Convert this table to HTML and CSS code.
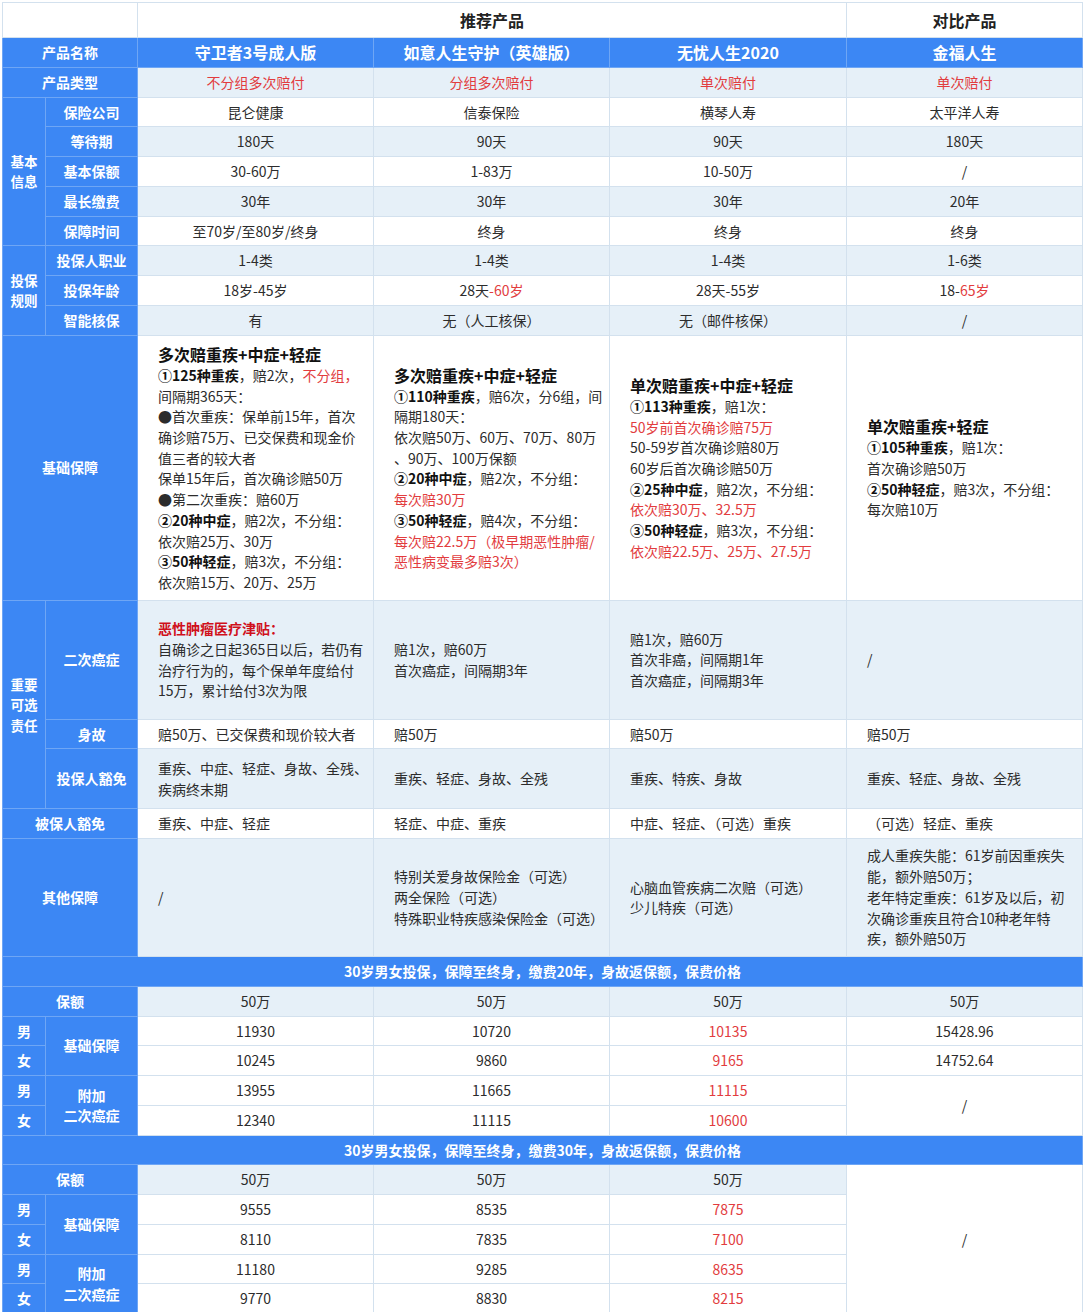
FILE: index.html
```html
<!DOCTYPE html>
<html lang="zh-CN">
<head>
<meta charset="utf-8">
<title>重疾险产品对比</title>
<link rel="stylesheet" href="styles.css">
</head>
<body>
<div class="wrap">
<table class="cmp">
<colgroup>
<col class="ca"><col class="cb"><col class="cc"><col class="cd"><col class="ce"><col class="cf">
</colgroup>
<tbody>
<tr class="rh">
  <td colspan="2" class="blank"></td>
  <td colspan="3" class="hd lt">推荐产品</td>
  <td class="hd">对比产品</td>
</tr>
<tr class="r bluerow">
  <td colspan="2" class="lb big">产品名称</td>
  <td class="big">守卫者3号成人版</td>
  <td class="big">如意人生守护（英雄版）</td>
  <td class="big">无忧人生2020</td>
  <td class="big">金福人生</td>
</tr>
<tr class="r lt">
  <td colspan="2" class="lb">产品类型</td>
  <td class="red">不分组多次赔付</td>
  <td class="red">分组多次赔付</td>
  <td class="red">单次赔付</td>
  <td class="red">单次赔付</td>
</tr>
<tr class="r">
  <td rowspan="5" class="lb grp">基本<br>信息</td>
  <td class="lb">保险公司</td>
  <td>昆仑健康</td><td>信泰保险</td><td>横琴人寿</td><td>太平洋人寿</td>
</tr>
<tr class="r lt">
  <td class="lb">等待期</td>
  <td>180天</td><td>90天</td><td>90天</td><td>180天</td>
</tr>
<tr class="r">
  <td class="lb">基本保额</td>
  <td>30-60万</td><td>1-83万</td><td>10-50万</td><td>/</td>
</tr>
<tr class="r lt">
  <td class="lb">最长缴费</td>
  <td>30年</td><td>30年</td><td>30年</td><td>20年</td>
</tr>
<tr class="r">
  <td class="lb">保障时间</td>
  <td>至70岁/至80岁/终身</td><td>终身</td><td>终身</td><td>终身</td>
</tr>
<tr class="r lt">
  <td rowspan="3" class="lb grp">投保<br>规则</td>
  <td class="lb">投保人职业</td>
  <td>1-4类</td><td>1-4类</td><td>1-4类</td><td>1-6类</td>
</tr>
<tr class="r">
  <td class="lb">投保年龄</td>
  <td>18岁-45岁</td><td>28天<span class="red">-60岁</span></td><td>28天-55岁</td><td>18-<span class="red">65岁</span></td>
</tr>
<tr class="r lt">
  <td class="lb">智能核保</td>
  <td>有</td><td>无（人工核保）</td><td>无（邮件核保）</td><td>/</td>
</tr>
<tr class="rbase">
  <td colspan="2" class="lb">基础保障</td>
  <td class="tx">
    <div class="ttl">多次赔重疾+中症+轻症</div>
    <b>①125种重疾</b>，赔2次，<span class="red">不分组，</span><br>
    间隔期365天：<br>
    ●首次重疾：保单前15年，首次<br>
    确诊赔75万、已交保费和现金价<br>
    值三者的较大者<br>
    保单15年后，首次确诊赔50万<br>
    ●第二次重疾：赔60万<br>
    <b>②20种中症</b>，赔2次，不分组：<br>
    依次赔25万、30万<br>
    <b>③50种轻症</b>，赔3次，不分组：<br>
    依次赔15万、20万、25万
  </td>
  <td class="tx">
    <div class="ttl">多次赔重疾+中症+轻症</div>
    <b>①110种重疾</b>，赔6次，分6组，间<br>
    隔期180天：<br>
    依次赔50万、60万、70万、80万<br>
    、90万、100万保额<br>
    <b>②20种中症</b>，赔2次，不分组：<br>
    <span class="red">每次赔30万</span><br>
    <b>③50种轻症</b>，赔4次，不分组：<br>
    <span class="red">每次赔22.5万（极早期恶性肿瘤/</span><br>
    <span class="red">恶性病变最多赔3次）</span>
  </td>
  <td class="tx">
    <div class="ttl">单次赔重疾+中症+轻症</div>
    <b>①113种重疾</b>，赔1次：<br>
    <span class="red">50岁前首次确诊赔75万</span><br>
    50-59岁首次确诊赔80万<br>
    60岁后首次确诊赔50万<br>
    <b>②25种中症</b>，赔2次，不分组：<br>
    <span class="red">依次赔30万、32.5万</span><br>
    <b>③50种轻症</b>，赔3次，不分组：<br>
    <span class="red">依次赔22.5万、25万、27.5万</span>
  </td>
  <td class="tx">
    <div class="ttl">单次赔重疾+轻症</div>
    <b>①105种重疾</b>，赔1次：<br>
    首次确诊赔50万<br>
    <b>②50种轻症</b>，赔3次，不分组：<br>
    每次赔10万
  </td>
</tr>
<tr class="rtall lt">
  <td rowspan="3" class="lb grp">重要<br>可选<br>责任</td>
  <td class="lb">二次癌症</td>
  <td class="tx"><span class="dred">恶性肿瘤医疗津贴：</span><br>自确诊之日起365日以后，若仍有<br>治疗行为的，每个保单年度给付<br>15万，累计给付3次为限</td>
  <td class="tx">赔1次，赔60万<br>首次癌症，间隔期3年</td>
  <td class="tx">赔1次，赔60万<br>首次非癌，间隔期1年<br>首次癌症，间隔期3年</td>
  <td class="tx">/</td>
</tr>
<tr class="r">
  <td class="lb">身故</td>
  <td class="tx">赔50万、已交保费和现价较大者</td>
  <td class="tx">赔50万</td>
  <td class="tx">赔50万</td>
  <td class="tx">赔50万</td>
</tr>
<tr class="r2 lt">
  <td class="lb">投保人豁免</td>
  <td class="tx">重疾、中症、轻症、身故、全残、<br>疾病终末期</td>
  <td class="tx">重疾、轻症、身故、全残</td>
  <td class="tx">重疾、特疾、身故</td>
  <td class="tx">重疾、轻症、身故、全残</td>
</tr>
<tr class="r">
  <td colspan="2" class="lb">被保人豁免</td>
  <td class="tx">重疾、中症、轻症</td>
  <td class="tx">轻症、中症、重疾</td>
  <td class="tx">中症、轻症、（可选）重疾</td>
  <td class="tx">（可选）轻症、重疾</td>
</tr>
<tr class="rtall lt">
  <td colspan="2" class="lb">其他保障</td>
  <td class="tx">/</td>
  <td class="tx">特别关爱身故保险金（可选）<br>两全保险（可选）<br>特殊职业特疾感染保险金（可选）</td>
  <td class="tx">心脑血管疾病二次赔（可选）<br>少儿特疾（可选）</td>
  <td class="tx">成人重疾失能：61岁前因重疾失<br>能，额外赔50万；<br>老年特定重疾：61岁及以后，初<br>次确诊重疾且符合10种老年特<br>疾，额外赔50万</td>
</tr>
<tr class="r banner">
  <td colspan="6">30岁男女投保，保障至终身，缴费20年，身故返保额，保费价格</td>
</tr>
<tr class="r lt">
  <td colspan="2" class="lb">保额</td>
  <td>50万</td><td>50万</td><td>50万</td><td>50万</td>
</tr>
<tr class="r">
  <td class="lb">男</td>
  <td rowspan="2" class="lb">基础保障</td>
  <td>11930</td><td>10720</td><td class="red">10135</td><td>15428.96</td>
</tr>
<tr class="r">
  <td class="lb">女</td>
  <td>10245</td><td>9860</td><td class="red">9165</td><td>14752.64</td>
</tr>
<tr class="r">
  <td class="lb">男</td>
  <td rowspan="2" class="lb">附加<br>二次癌症</td>
  <td>13955</td><td>11665</td><td class="red">11115</td><td rowspan="2">/</td>
</tr>
<tr class="r">
  <td class="lb">女</td>
  <td>12340</td><td>11115</td><td class="red">10600</td>
</tr>
<tr class="r banner">
  <td colspan="6">30岁男女投保，保障至终身，缴费30年，身故返保额，保费价格</td>
</tr>
<tr class="r">
  <td colspan="2" class="lb">保额</td>
  <td class="ltc">50万</td><td class="ltc">50万</td><td class="ltc">50万</td><td rowspan="5">/</td>
</tr>
<tr class="r">
  <td class="lb">男</td>
  <td rowspan="2" class="lb">基础保障</td>
  <td>9555</td><td>8535</td><td class="red">7875</td>
</tr>
<tr class="r">
  <td class="lb">女</td>
  <td>8110</td><td>7835</td><td class="red">7100</td>
</tr>
<tr class="r">
  <td class="lb">男</td>
  <td rowspan="2" class="lb">附加<br>二次癌症</td>
  <td>11180</td><td>9285</td><td class="red">8635</td>
</tr>
<tr class="r">
  <td class="lb">女</td>
  <td>9770</td><td>8830</td><td class="red">8215</td>
</tr>
</tbody>
</table>
</div>
</body>
</html>
```
FILE: styles.css
```css
html, body {
  margin: 0;
  padding: 0;
  background: #ffffff;
}
body {
  font-family: "Noto Sans CJK SC", "Noto Sans", sans-serif;
}
.wrap {
  padding: 2px 2px 0 2px;
}
.cmp {
  border-collapse: collapse;
  table-layout: fixed;
  width: 1080px;
}
.ca { width: 43px; }
.cb { width: 92px; }
.cc { width: 236px; }
.cd { width: 236px; }
.ce { width: 237px; }
.cf { width: 236px; }

.cmp td {
  border: 1px solid #d3e1ee;
  padding: 0;
  font-size: 14px;
  line-height: 20.7px;
  color: #2c2c2c;
  text-align: center;
  vertical-align: middle;
  white-space: nowrap;
  background: #ffffff;
}
.rh { height: 35px; }
.r { height: 29.75px; }
.r2 { height: 59.5px; }
.rbase { height: 265.5px; }
.rtall { height: 118.5px; }

.lt td { background: #e6f0f8; }
.cmp td.ltc { background: #e6f0f8; }

.cmp td.blank { background: #ffffff; }
.cmp td.hd {
  font-size: 16px;
  font-weight: bold;
  color: #222222;
}
.cmp .bluerow td {
  background: #3c87f4;
  color: #ffffff;
  font-weight: bold;
  border-color: #6ea6f5;
}
.cmp td.big { font-size: 16px; }
.cmp td.lb {
  background: #3c87f4;
  color: #ffffff;
  font-weight: bold;
  border-color: #6ea6f5;
  font-size: 14px;
}
.cmp td.grp {
  font-size: 13.5px;
  line-height: 20.5px;
}
.cmp .banner td {
  background: #3c87f4;
  color: #ffffff;
  font-weight: bold;
  border-color: #6ea6f5;
}
.cmp td.tx {
  text-align: left;
  padding-left: 20px;
}
.ttl {
  font-size: 16px;
  font-weight: bold;
  color: #111111;
  line-height: 22px;
}
.cmp b {
  color: #111111;
  font-weight: bold;
}
.red { color: #e23c3e; }
.cmp td.red { color: #e23c3e; }
.dred {
  color: #d0101b;
  font-weight: bold;
}
```
